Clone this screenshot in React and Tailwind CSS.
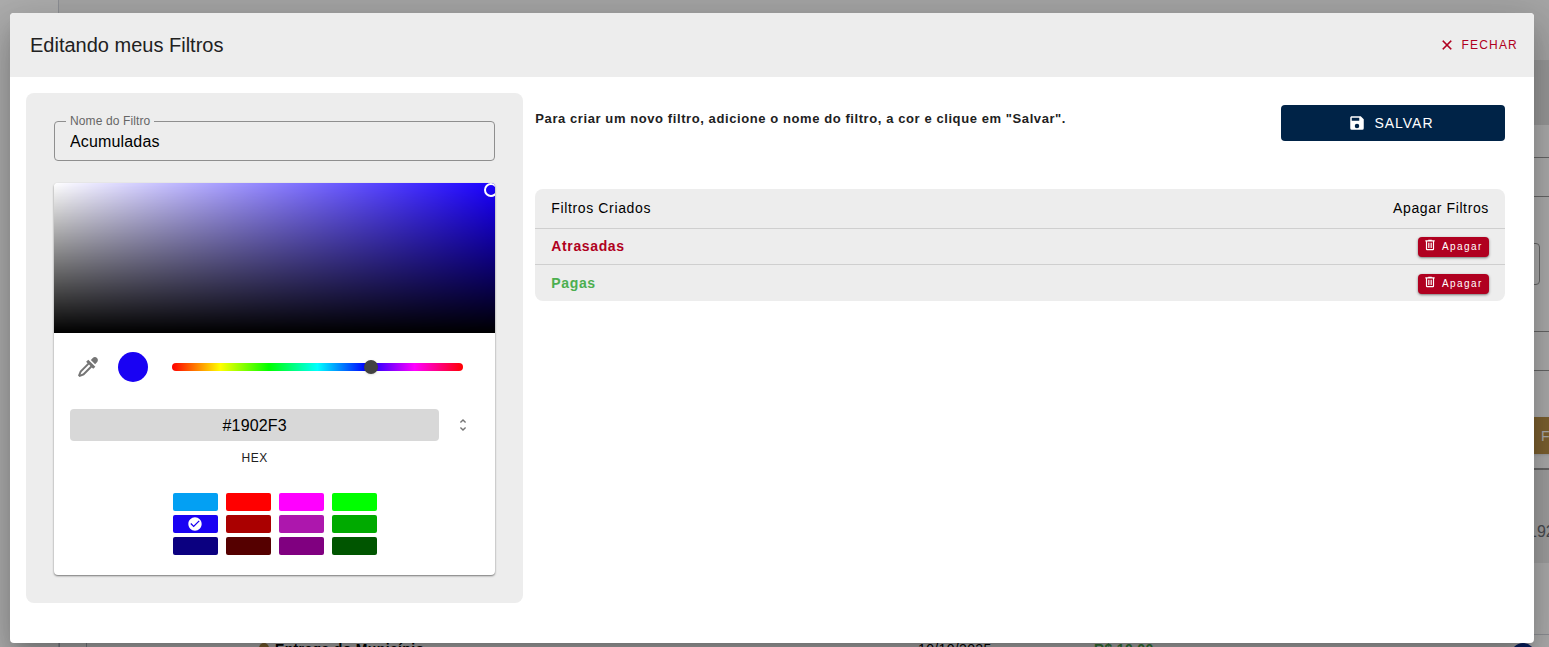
import React, { useState } from 'react';

const ICONS = {
	close: 'M19,6.41L17.59,5L12,10.59L6.41,5L5,6.41L10.59,12L5,17.59L6.41,19L12,13.41L17.59,19L19,17.59L13.41,12L19,6.41Z',
	save: 'M15,9H5V5H15M12,19A3,3 0 0,1 9,16A3,3 0 0,1 12,13A3,3 0 0,1 15,16A3,3 0 0,1 12,19M17,3H5C3.89,3 3,3.9 3,5V19A2,2 0 0,0 5,21H19A2,2 0 0,0 21,19V7L17,3Z',
	trash: 'M9,3V4H4V6H5V19A2,2 0 0,0 7,21H17A2,2 0 0,0 19,19V6H20V4H15V3H9M7,6H17V19H7V6M9,8V17H11V8H9M13,8V17H15V8H13Z',
	eyedropper: 'M19.35,11.72L17.22,13.85L15.81,12.43L8.1,20.14L3.5,22L2,20.5L3.86,15.9L11.57,8.19L10.15,6.78L12.28,4.65L19.35,11.72M16.76,3C17.93,1.83 19.83,1.83 21,3C22.17,4.17 22.17,6.07 21,7.24L19.08,9.16L14.84,4.92L16.76,3M5.56,17.03L4.5,19.5L6.97,18.44L14.4,11L13,9.6L5.56,17.03Z',
	unfold: 'M12,18.17L8.83,15L7.42,16.41L12,21L16.59,16.41L15.17,15M12,5.83L15.17,9L16.58,7.59L12,3L7.41,7.59L8.83,9L12,5.83Z',
	check: 'M12 2C6.5 2 2 6.5 2 12S6.5 22 12 22 22 17.5 22 12 17.5 2 12 2M10 17L5 12L6.41 10.59L10 14.17L17.59 6.58L19 8L10 17Z',
};

const Icon = ({ name, className }) => (
	<svg viewBox="0 0 24 24" fill="currentColor" aria-hidden="true" className={className}>
		<path d={ICONS[name]} />
	</svg>
);

// Row by row, as they show in the picker
const SWATCHES = [
	'#03A0F3', '#FF0000', '#FF00FF', '#00FF00',
	'#1902F3', '#AA0000', '#AD17AD', '#00AA00',
	'#0B0080', '#550000', '#800080', '#005500',
];

// Page behind the dialog
const Dashboard = () => (
	<div className="absolute inset-0 flex overflow-hidden bg-white" aria-hidden="true">
		<div className="w-[59px] shrink-0 border-r border-gray-300" />
		<div className="flex min-w-0 flex-1 flex-col">
			<div className="h-[60px] shrink-0 bg-[#f4f4f4]" />
			<div className="h-[65px] shrink-0 bg-[#e2e2e2]" />
			<div className="h-8 shrink-0" />
			<div className="h-10 shrink-0 border-y border-[#999]" />
			<div className="mt-[46px] mr-[9px] h-[42px] shrink-0 rounded border border-[#999]" />
			<div className="mt-[46px] h-10 shrink-0 border-y border-[#999]" />
			<div className="mt-[46px] flex h-[53px] shrink-0 items-start justify-end border-b-2 border-[#999]">
				<span className="-mr-[74px] flex h-[37px] w-[140px] shrink-0 items-center bg-[#b98f48] pl-[58px] text-sm tracking-wider text-white shadow">FILTRAR</span>
			</div>
			<div className="flex h-[93px] shrink-0 items-center justify-end bg-[#ececec] pt-[30px] text-[#6b6f76]">
				<span className="-mr-7">R$ 192,00</span>
			</div>
			<div className="h-[72px] shrink-0 border-b border-gray-300" />
			<div className="flex h-8 shrink-0 items-start text-sm text-black">
				<div className="mr-[172px] h-8 w-7 shrink-0 border-x border-[#b9bdc9]" />
				<span className="mt-2 size-2.5 rounded-full bg-[#b98f48]" />
				<b className="ml-[6px] w-[643px] pt-1 tracking-wide">Entrega do Município</b>
				<span className="w-[176px] pt-1 tracking-wide">10/10/2025</span>
				<b className="flex-1 pt-1 tracking-wide text-[#4caf50]">R$ 10,00</b>
				<span className="mt-2 mr-3.5 size-6 rounded-full bg-[#0b2f8f]" />
			</div>
		</div>
	</div>
);

const App = () => {
	const [nome, setNome] = useState('Acumuladas');
	const [cor, setCor] = useState('#1902F3');
	const [hue, setHue] = useState(246);
	const [filtros, setFiltros] = useState([
		{ id: 1, nome: 'Atrasadas', cor: '#B00020' },
		{ id: 2, nome: 'Pagas', cor: '#4CAF50' },
	]);

	const handleSalvar = () => {
		if (!nome) return;
		setFiltros([...filtros, { id: Date.now(), nome, cor }]);
		setNome('');
	};

	const handleApagar = (id) => {
		setFiltros(filtros.filter((f) => f.id !== id));
	};

	return (
		<div className="relative min-h-screen font-['Liberation_Sans',Arial,sans-serif]">
			<Dashboard />
			<div className="absolute inset-0 bg-black/32" />

			<div className="relative flex min-h-screen flex-col pt-[13px] pr-[15px] pb-1 pl-2.5">
				<div
					role="dialog"
					aria-labelledby="dialog-title"
					className="flex-1 overflow-hidden rounded bg-white shadow-[0_11px_15px_-7px_rgba(0,0,0,0.2),0_24px_38px_3px_rgba(0,0,0,0.14),0_9px_46px_8px_rgba(0,0,0,0.12)]"
				>
					{/* Header */}
					<div className="flex h-16 items-center justify-between bg-[#ededed] pr-4 pl-5">
						<h1 id="dialog-title" className="text-xl text-[#212121]">Editando meus Filtros</h1>
						<button className="flex items-center gap-1.5 text-xs tracking-widest text-[#b00020]">
							<Icon name="close" className="size-4 stroke-current stroke-[0.4]" />
							FECHAR
						</button>
					</div>

					<div className="flex p-4 pb-10">
						{/* Editor */}
						<div className="w-1/3 rounded-lg bg-[#ededed] p-7">
							<div className="relative">
								<label htmlFor="nome" className="absolute -top-2 left-3 bg-[#ededed] px-1 text-xs tracking-[0.01em] text-[#666]">
									Nome do Filtro
								</label>
								<input
									id="nome"
									type="text"
									value={nome}
									onChange={(e) => setNome(e.target.value)}
									className="block h-10 w-full rounded border border-[#8f8f8f] px-[15px] pt-0.5 text-base tracking-[0.01em] text-black outline-none"
								/>
							</div>

							{/* Color picker */}
							<div className="mt-[22px] overflow-hidden rounded bg-white shadow-[0_1px_2px_rgba(0,0,0,0.5)]">
								<div
									className="relative h-[150px] overflow-hidden"
									style={{ background: `linear-gradient(to top, #000, transparent), linear-gradient(to right, #fff, hsl(${hue} 100% 50%))` }}
								>
									<span className="absolute top-0 -right-[3px] size-3.5 rounded-full border-2 border-white" />
								</div>

								<div className="flex items-center pt-[19px] pr-8 pl-[22px]">
									<button aria-label="Conta-gotas" className="text-[#757575]">
										<Icon name="eyedropper" className="size-6" />
									</button>
									<span className="ml-[18px] size-[30px] rounded-full" style={{ backgroundColor: cor }} />
									<div className="ml-6 flex h-2 flex-1 items-center rounded-full bg-[linear-gradient(to_right,#f00,#ff0,#0f0,#0ff,#00f,#f0f,#f00)]">
										<input
											type="range"
											min="0"
											max="360"
											aria-label="Matiz"
											value={hue}
											onChange={(e) => setHue(Number(e.target.value))}
											className="-mx-[7px] min-w-0 flex-1 appearance-none bg-transparent [&::-webkit-slider-thumb]:size-3.5 [&::-webkit-slider-thumb]:appearance-none [&::-webkit-slider-thumb]:rounded-full [&::-webkit-slider-thumb]:bg-[#424242] [&::-webkit-slider-thumb]:shadow"
										/>
									</div>
								</div>

								<div className="mt-[27px] flex items-start pr-6 pl-4">
									<div className="flex flex-1 flex-col text-center">
										<input
											id="hex"
											type="text"
											value={cor}
											onChange={(e) => setCor(e.target.value)}
											className="h-8 w-full rounded bg-[#d8d8d8] pt-0.5 text-center text-base tracking-[0.01em] text-black outline-none"
										/>
										<label htmlFor="hex" className="mt-[9px] text-xs tracking-wider text-[#212121]">HEX</label>
									</div>
									<button aria-label="Mudar formato" className="ml-4 flex h-8 w-4 items-center text-[#757575]">
										<Icon name="unfold" className="size-4" />
									</button>
								</div>

								<div className="mt-[27px] mb-5 grid grid-cols-[repeat(4,45px)] justify-center gap-x-2 gap-y-1">
									{SWATCHES.map((s) => (
										<button
											key={s}
											aria-label={s}
											onClick={() => setCor(s)}
											className="flex h-[18px] items-center justify-center rounded-xs text-white"
											style={{ backgroundColor: s }}
										>
											{s === cor && <Icon name="check" className="size-4" />}
										</button>
									))}
								</div>
							</div>
						</div>

						{/* Saved filters */}
						<div className="w-2/3 py-3 pr-[13px] pl-3">
							<div className="flex items-start justify-between">
								<p className="pt-1 text-[13px] font-bold tracking-[0.045em] text-[#212121]">
									Para criar um novo filtro, adicione o nome do filtro, a cor e clique em "Salvar".
								</p>
								<button
									onClick={handleSalvar}
									className="flex h-9 w-56 items-center justify-center gap-2 rounded bg-[#002347] pr-1 text-sm tracking-[1px] text-white"
								>
									<Icon name="save" className="size-[18px]" />
									SALVAR
								</button>
							</div>

							<div className="mt-12 overflow-hidden rounded-lg bg-[#ededed]">
								<table className="w-full text-sm tracking-[0.045em] text-black">
									<thead>
										<tr className="h-[39px] border-b border-[#cfcfcf]">
											<th className="px-4 text-left font-normal">Filtros Criados</th>
											<th className="px-4 text-right font-normal">Apagar Filtros</th>
										</tr>
									</thead>
									<tbody>
										{filtros.map((f) => (
											<tr key={f.id} className="h-9 border-b border-[#cfcfcf] last:h-[37px] last:border-b-0">
												<td className="px-4 font-bold" style={{ color: f.cor }}>{f.nome}</td>
												<td className="px-4 pt-0.5">
													<button
														onClick={() => handleApagar(f.id)}
														className="ml-auto flex h-5 w-[71px] items-center gap-[5px] rounded bg-[#b00020] px-[5px] text-[10px] tracking-[0.14em] text-white shadow-sm shadow-black/40"
													>
														<Icon name="trash" className="mb-1 size-3.5" />
														Apagar
													</button>
												</td>
											</tr>
										))}
									</tbody>
								</table>
							</div>
						</div>
					</div>
				</div>
			</div>
		</div>
	);
};

export default App;
